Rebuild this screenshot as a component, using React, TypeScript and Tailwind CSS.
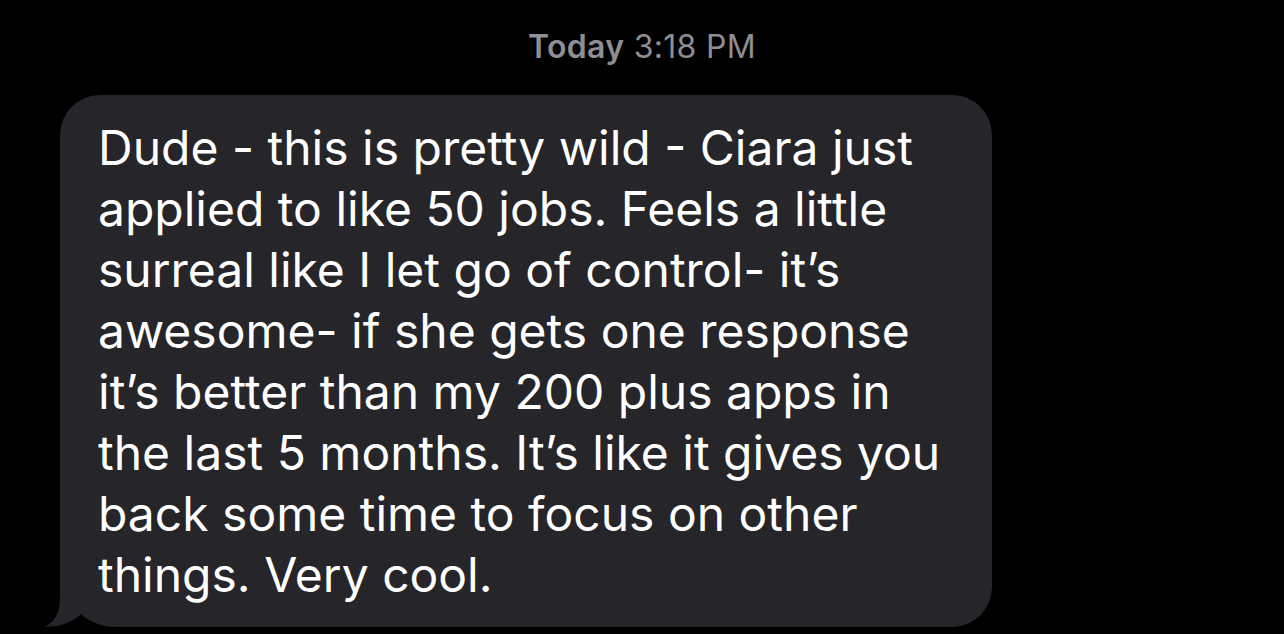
import React from "react";

const lines = [
  "Dude - this is pretty wild - Ciara just",
  "applied to like 50 jobs. Feels a little",
  "surreal like I let go of control- it\u2019s",
  "awesome- if she gets one response",
  "it\u2019s better than my 200 plus apps in",
  "the last 5 months. It\u2019s like it gives you",
  "back some time to focus on other",
  "things. Very cool.",
];

const BubbleTail = () => (
  <svg
    className="absolute left-[-15px] bottom-0"
    width="80"
    height="60"
    viewBox="0 0 80 60"
  >
    <path
      d="M15 0 L15 30 C15 45 10 55 0 59.5 C14 60 26 56 35 48 L35 0 Z"
      fill="#262529"
    />
  </svg>
);

export default function App() {
  return (
    <div
      className="w-[1284px] h-[634px] bg-black overflow-hidden"
      style={{ fontFamily: "Inter, 'Noto Sans', sans-serif" }}
    >
      <div className="pt-[29px] text-center text-[32px] leading-[36px] tracking-[0.3px] text-[#8e8e93]">
        <span className="font-semibold">Today</span> 3:18 PM
      </div>
      <div className="pl-[60px] pt-[30px]">
        <div className="relative w-[932px] rounded-[40px] rounded-bl-[56px] bg-[#262529] pl-[38px] pt-[22px] pb-[22px] text-white text-[48px] leading-[61px]">
          <BubbleTail />
          <div className="relative whitespace-nowrap">
            {lines.map((l, i) => (
              <div key={i}>{l}</div>
            ))}
          </div>
        </div>
      </div>
    </div>
  );
}
